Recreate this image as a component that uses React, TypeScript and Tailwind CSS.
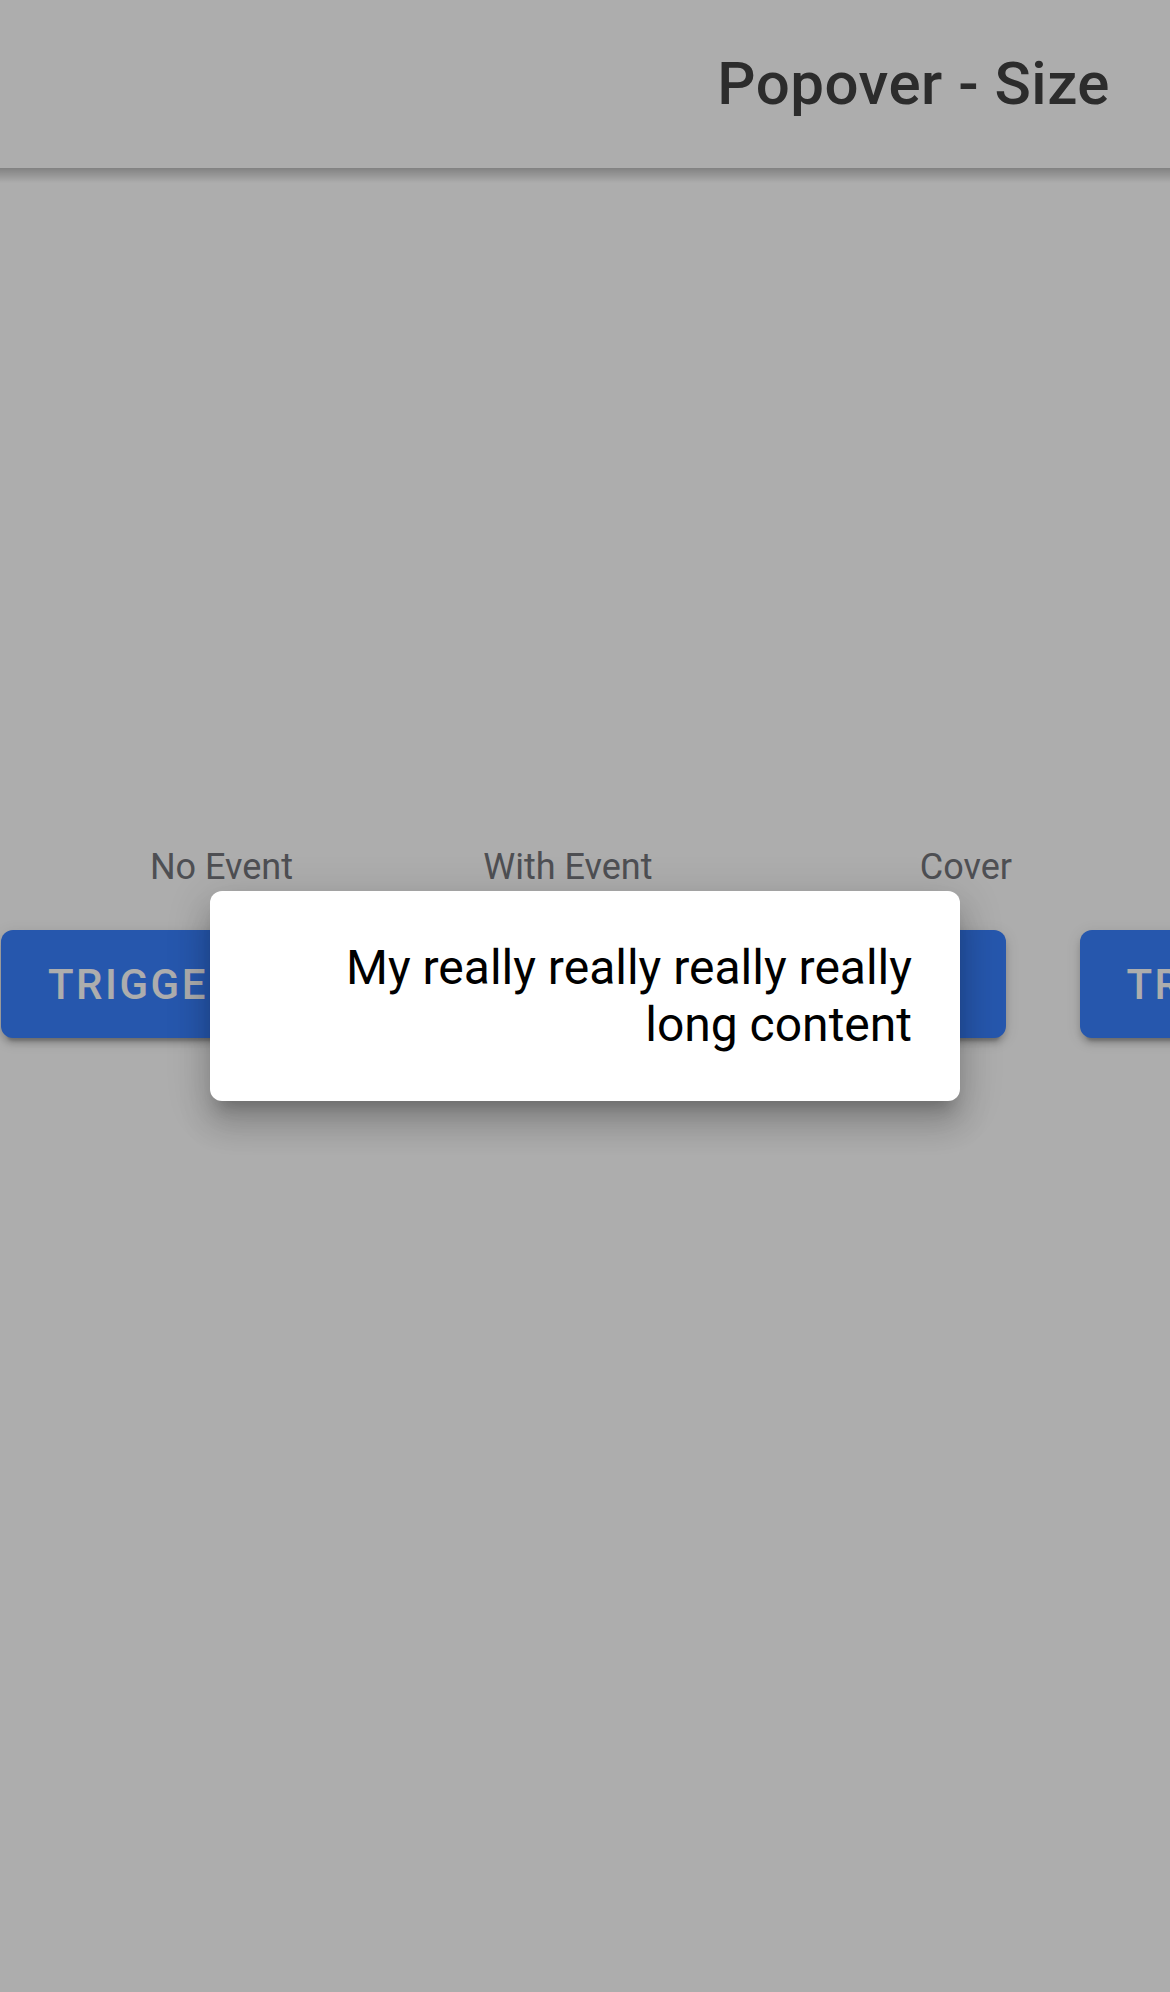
export default function App() {
  const items = ["No Event", "With Event", "Cover", ""];
  return (
    <div className="relative min-h-screen w-full overflow-hidden bg-white font-['Roboto',sans-serif]">
      <header className="relative z-10 flex h-[168px] items-center justify-end bg-white pr-[60px]">
        <h1 className="text-[60px] font-medium leading-none tracking-[0.5px] text-[#424242]">Popover - Size</h1>
        <div className="absolute left-0 right-0 top-full h-[15px] bg-linear-to-b from-black/25 to-transparent" />
      </header>
      <main className="flex gap-[66.5px] pt-[678px]">
        {items.map((label, i) => (
          <div key={i} className="flex w-[293px] shrink-0 flex-col items-end">
            <div className="h-[42px] text-right text-[36px] leading-[42px] text-[#73757b]">{label}</div>
            <button className="mr-[6px] mt-[42px] flex h-[108px] w-[286px] items-center rounded-[12px] bg-[#3880ff] pl-[47px] text-[42px] font-medium uppercase tracking-[0.06em] text-white shadow-[0_9px_3px_-6px_rgba(0,0,0,0.2),0_6px_6px_0_rgba(0,0,0,0.14),0_3px_15px_0_rgba(0,0,0,0.12)]">
              Trigger
            </button>
          </div>
        ))}
      </main>
      <div className="absolute inset-0 z-20 bg-black/[0.32]" />
      <div className="absolute left-[210px] top-[891px] z-30 w-[750px] rounded-[12px] bg-white p-[48px] text-right text-[48px] leading-[57px] text-black shadow-[0_15px_15px_-9px_rgba(0,0,0,0.2),0_24px_30px_3px_rgba(0,0,0,0.14),0_9px_42px_6px_rgba(0,0,0,0.12)]">
        My really really really really long content
      </div>
    </div>
  );
}
